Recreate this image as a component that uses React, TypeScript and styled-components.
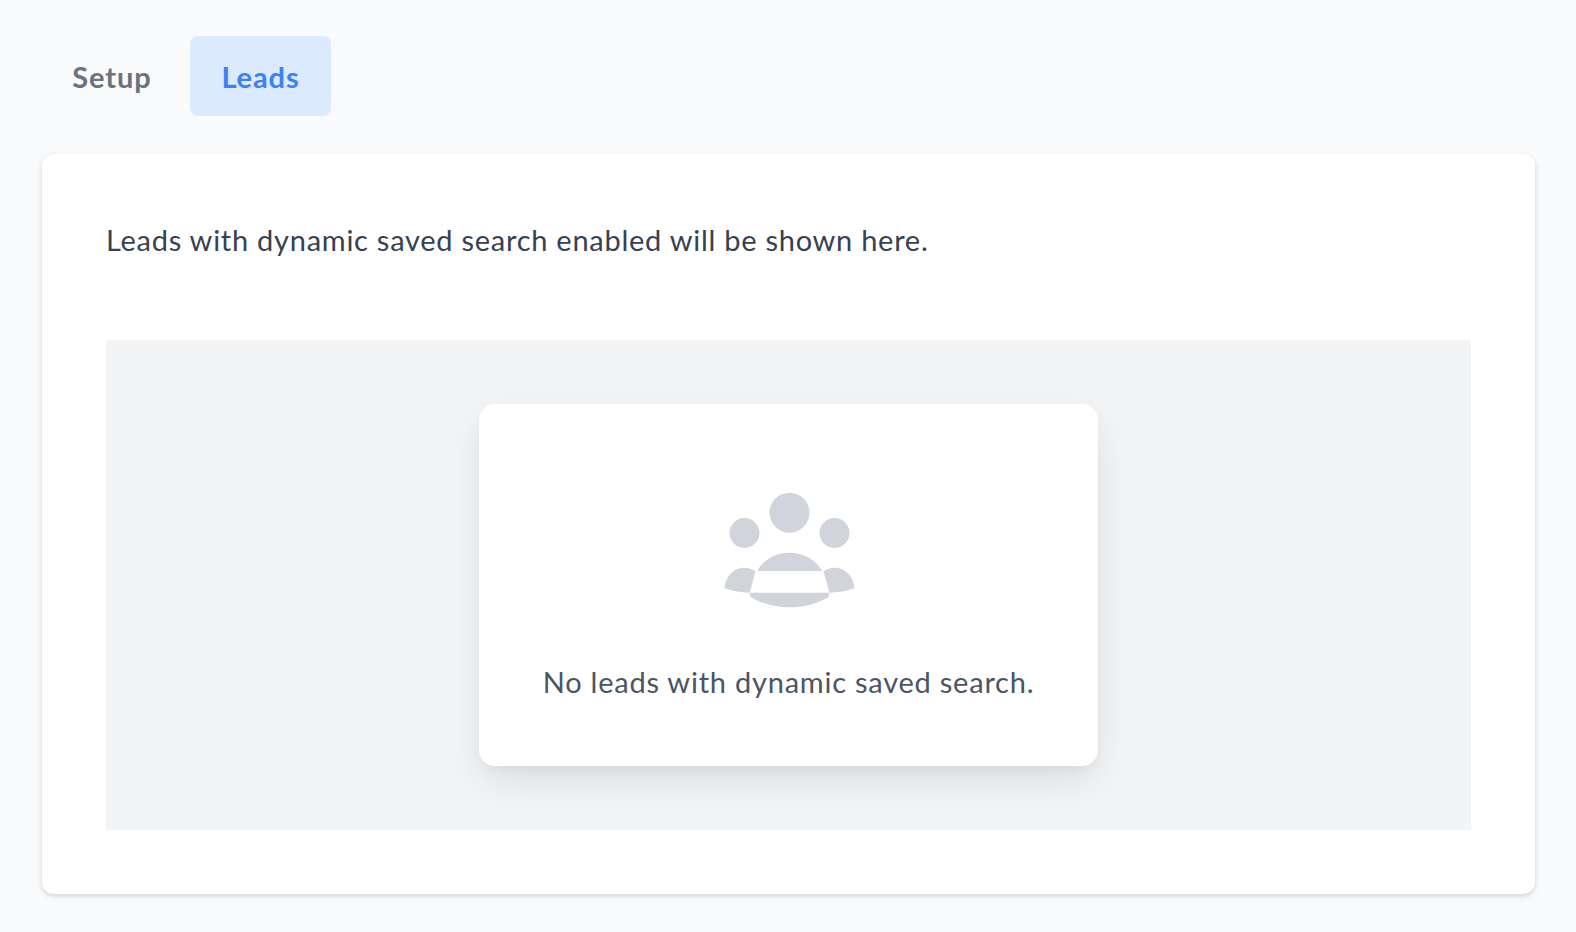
import styled, { createGlobalStyle } from "styled-components";

const GlobalStyle = createGlobalStyle`
  html, body {
    margin: 0;
    background: #f9fafb;
  }
  body {
    font-family: "Lato", "Open Sans", sans-serif;
  }
`;

const LeadsIcon = () => (
  <IconSvg viewBox="55.5 60 420 360" aria-hidden="true">
    <circle cx="267" cy="128" r="60" />
    <circle cx="132" cy="189" r="45" />
    <circle cx="402" cy="189" r="45" />
    <path d="M170 303C188 270 224 248 267 248C310 248 347 270 365 303Z" />
    <path d="M147 368H387L384 381C350 402 310 412 267 412C224 412 184 402 150 381Z" />
    <path d="M72 355C74 320 100 293 130 293C143 293 155 297 165 303L148 368C120 368 95 363 72 355Z" />
    <path d="M462 355C460 320 434 293 404 293C391 293 379 297 369 303L387 368C415 368 439 363 462 355Z" />
  </IconSvg>
);

const App = () => {
  return (
    <Page>
      <GlobalStyle />
      <Tabs>
        <Tab>Setup</Tab>
        <Tab $active>Leads</Tab>
      </Tabs>
      <Panel>
        <Intro>Leads with dynamic saved search enabled will be shown here.</Intro>
        <EmptyArea>
          <EmptyCard>
            <LeadsIcon />
            <EmptyText>No leads with dynamic saved search.</EmptyText>
          </EmptyCard>
        </EmptyArea>
      </Panel>
    </Page>
  );
};

const Page = styled.div`
  box-sizing: border-box;
  height: 932px;
  padding: 36px 41px 0 42px;
  overflow: hidden;
`;

const Tabs = styled.div`
  display: flex;
  gap: 8px;
  margin-bottom: 38px;
`;

const Tab = styled.div<{ $active?: boolean }>`
  display: flex;
  align-items: center;
  justify-content: center;
  width: ${(p) => (p.$active ? "141px" : "140px")};
  height: 80px;
  box-sizing: border-box;
  border-radius: 8px;
  font-size: 29px;
  font-weight: 700;
  letter-spacing: 0.9px;
  color: ${(p) => (p.$active ? "#3b82f6" : "#6b7280")};
  background: ${(p) => (p.$active ? "#dbeafe" : "transparent")};
`;

const Panel = styled.div`
  box-sizing: border-box;
  height: 740px;
  padding: 64px;
  background: #fff;
  border-radius: 12px;
  box-shadow: 0 2px 6px rgba(0, 0, 0, 0.1), 0 2px 4px rgba(0, 0, 0, 0.06);
`;

const Intro = styled.p`
  margin: 0 0 64px;
  height: 58px;
  font-size: 29px;
  line-height: 44px;
  letter-spacing: 0.74px;
  color: #374151;
`;

const EmptyArea = styled.div`
  box-sizing: border-box;
  height: 490px;
  padding-top: 64px;
  display: flex;
  justify-content: center;
  align-items: flex-start;
  background: #f3f4f6;
`;

const EmptyCard = styled.div`
  box-sizing: border-box;
  width: 619px;
  height: 362px;
  padding-top: 86px;
  display: flex;
  flex-direction: column;
  align-items: center;
  background: #fff;
  border-radius: 16px;
  box-shadow: 0 16px 40px -4px rgba(0, 0, 0, 0.11), 0 6px 12px -4px rgba(0, 0, 0, 0.05);
`;

const IconSvg = styled.svg`
  display: block;
  width: 140px;
  height: 120px;
  fill: #d1d5db;
`;

const EmptyText = styled.p`
  margin: 50px 0 0;
  font-size: 29px;
  line-height: 44px;
  letter-spacing: 0.77px;
  color: #4b5563;
`;

export default App;
